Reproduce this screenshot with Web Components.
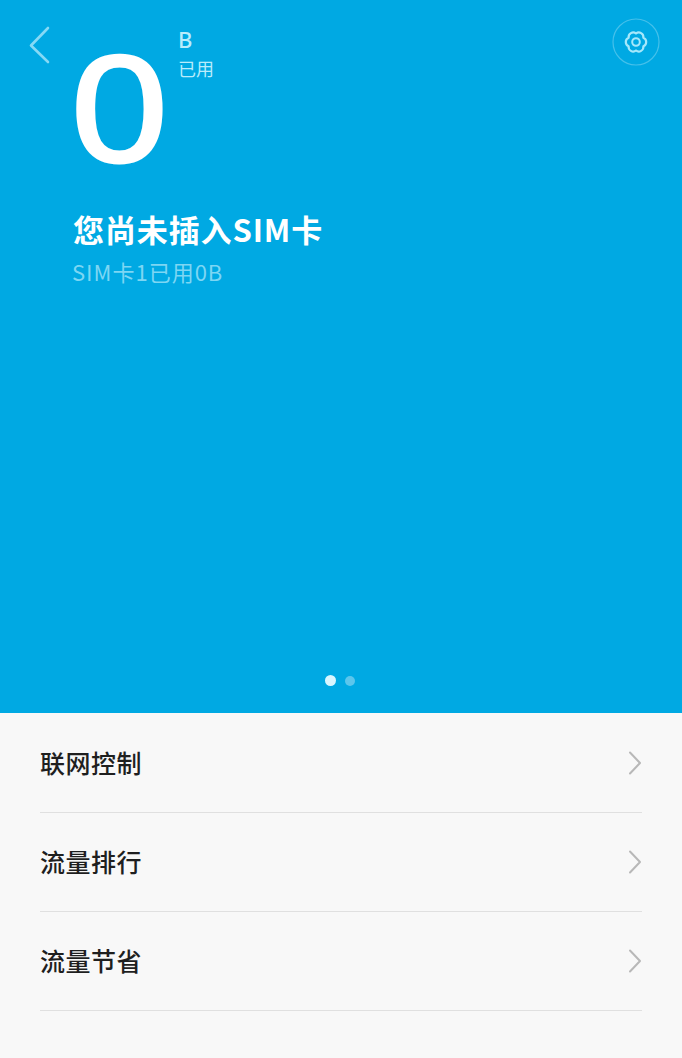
<!DOCTYPE html>
<html lang="zh-CN">
<head>
<meta charset="utf-8">
<title>流量</title>
<style>
html,body{margin:0;padding:0;background:#f8f8f8}
body{width:682px;height:1058px;overflow:hidden;font-family:"Noto Sans CJK SC","Noto Sans",sans-serif}
</style>
</head>
<body>
<usage-app>
  <usage-hero slot="hero"></usage-hero>
  <menu-row>联网控制</menu-row>
  <menu-row>流量排行</menu-row>
  <menu-row>流量节省</menu-row>
</usage-app>
<script>
function def(name, html){
  customElements.define(name, class extends HTMLElement{
    constructor(){super();this.attachShadow({mode:'open'}).innerHTML=html;}
  });
}
def('usage-app',`<style>
:host{display:flex;flex-direction:column;width:682px;height:1058px;background:#f8f8f8}
</style><slot name="hero"></slot><slot></slot>`);

def('back-button',`<style>:host{display:block;width:24px;height:38px}svg{display:block}</style>
<svg width="24" height="38" viewBox="0 0 24 38" fill="none"><path d="M20 2 L3 19.5 L20 36" stroke="#86d9f5" stroke-width="2.6" stroke-linecap="round" stroke-linejoin="round"/></svg>`);

def('settings-button',`<style>:host{display:block;width:48px;height:48px}svg{display:block}</style>
<svg width="48" height="48" viewBox="-24 -24 48 48" fill="none">
<circle r="23" stroke="#ffffff" stroke-opacity=".27" stroke-width="1.2"/>
<path d="M7.36 4.25A4.6 4.6 0 0 1 0 8.5A4.6 4.6 0 0 1-7.36 4.25A4.6 4.6 0 0 1-7.36-4.25A4.6 4.6 0 0 1 0-8.5A4.6 4.6 0 0 1 7.36-4.25A4.6 4.6 0 0 1 7.36 4.25Z" stroke="#a6e8fb" stroke-width="2.2" stroke-linejoin="round"/>
<circle r="3.8" stroke="#a6e8fb" stroke-width="2"/>
</svg>`);

def('pager-dots',`<style>
:host{display:flex;justify-content:center;align-items:center;gap:9px}
i{display:block;width:11px;height:11px;border-radius:50%;background:#d9f6ff}
i+i{width:10px;height:10px;background:#5cc6ec}
</style><i></i><i></i>`);

def('usage-hero',`<style>
:host{display:flex;flex-direction:column;box-sizing:border-box;height:713px;margin-bottom:1px;background:#00a9e3;color:#fff;flex:none}
.top{display:grid;grid-template-columns:72px 95px 1fr 48px;align-items:start;padding:0 22px 0 0;height:172px}
back-button{margin:26px 0 0 28px}
.zero{font:400 152px/118px "Liberation Sans",sans-serif;height:118px;margin-top:50px;text-align:center;-webkit-text-stroke:3px #fff;transform:scaleX(1.14)}
.unit{display:flex;flex-direction:column;align-items:flex-start;padding:26px 0 0 11px;color:#b9ecfb}
.b{font:500 22px/27px "Noto Sans",sans-serif}
.used{font:400 18px/26px "Noto Sans CJK SC",sans-serif;margin-top:2px}
settings-button{margin-top:18px}
.text{padding:35px 0 0 73px;flex:1}
.title{font:700 31px/44px "Noto Sans CJK SC",sans-serif;letter-spacing:.9px;white-space:nowrap}
.sub{font:400 22px/32px "Noto Sans CJK SC",sans-serif;letter-spacing:1px;color:#7dd6f3;white-space:nowrap;margin-top:4px;margin-left:-1px}
pager-dots{margin:0 2px 27px 0}
</style>
<div class="top">
  <back-button></back-button>
  <div class="zero">0</div>
  <div class="unit"><span class="b">B</span><span class="used">已用</span></div>
  <settings-button></settings-button>
</div>
<div class="text">
  <div class="title">您尚未插入SIM卡</div>
  <div class="sub">SIM卡1已用0B</div>
</div>
<pager-dots></pager-dots>`);

def('menu-row',`<style>
:host{display:flex;align-items:center;justify-content:space-between;box-sizing:border-box;height:99px;padding-bottom:1px;margin:0 40px 0 40px;border-bottom:1px solid #e0e0e0;color:#1f1f1f;font:500 25px/1 "Noto Sans CJK SC",sans-serif;letter-spacing:.5px;flex:none}
svg{display:block}
</style><slot></slot>
<svg width="14" height="24" viewBox="0 0 14 24" fill="none"><path d="M2 1.5 L12 12 L2 22.5" stroke="#b8b8b8" stroke-width="2" stroke-linecap="round" stroke-linejoin="round"/></svg>`);
</script>
</body>
</html>
